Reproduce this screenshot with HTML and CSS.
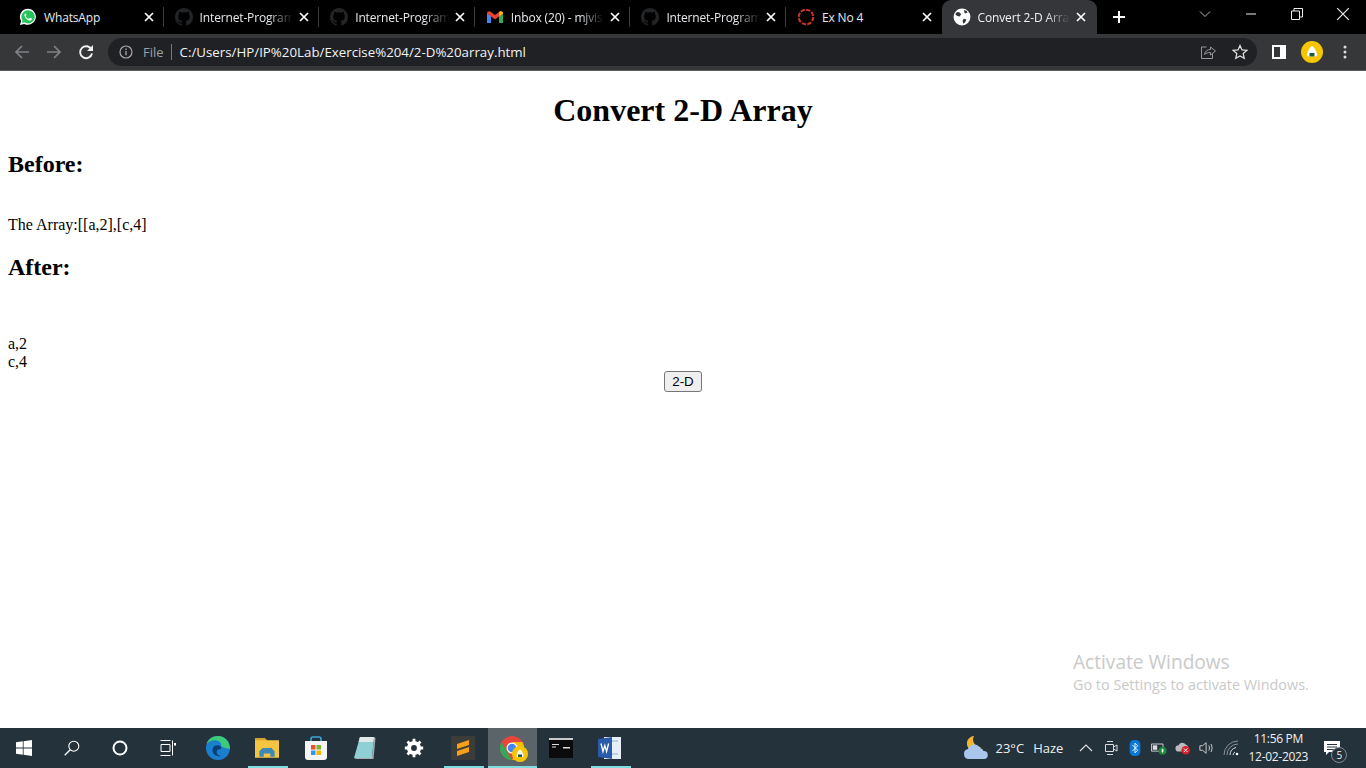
FILE: index.html
```html
<!DOCTYPE html>
<html lang="en">
<head>
  <meta charset="UTF-8" />
  <title>Convert 2-D Array</title>
  <link rel="stylesheet" href="styles.css">
</head>
<body>
  <svg class="sprite" width="0" height="0">
    <symbol id="github" viewBox="0 0 16 16">
      <path d="M8 0C3.58 0 0 3.58 0 8c0 3.54 2.29 6.53 5.47 7.59.4.07.55-.17.55-.38 0-.19-.01-.82-.01-1.49-2.01.37-2.53-.49-2.69-.94-.09-.23-.48-.94-.82-1.13-.28-.15-.68-.52-.01-.53.63-.01 1.08.58 1.23.82.72 1.21 1.87.87 2.33.66.07-.52.28-.87.51-1.07-1.78-.2-3.64-.89-3.64-3.95 0-.87.31-1.59.82-2.15-.08-.2-.36-1.02.08-2.12 0 0 .67-.21 2.2.82.64-.18 1.32-.27 2-.27.68 0 1.36.09 2 .27 1.53-1.04 2.2-.82 2.2-.82.44 1.1.16 1.92.08 2.12.51.56.82 1.27.82 2.15 0 3.07-1.87 3.75-3.65 3.95.29.25.54.73.54 1.48 0 1.07-.01 1.93-.01 2.2 0 .21.15.46.55.38A8.013 8.013 0 0016 8c0-4.42-3.58-8-8-8z" fill="#232426"/>
    </symbol>
    <symbol id="close" viewBox="0 0 10 10">
      <path d="M1 1l8 8M9 1l-8 8" stroke="#fff" stroke-width="1.7" fill="none"/>
    </symbol>
  </svg>

  <div class="tabstrip">
    <div class="tab">
      <svg class="favicon" viewBox="0 0 18 18"><path d="M9 .8a8 8 0 0 0-6.9 12.1L1 17l4.2-1.1A8 8 0 1 0 9 .8z" fill="#fff"/><path d="M9 2.2a6.6 6.6 0 0 0-5.5 10.2l-.7 2.6 2.7-.7A6.6 6.6 0 1 0 9 2.2z" fill="#25c45a"/><path d="M6.7 5.2c-.3 0-.8.2-1 .7-.5 1.100-.3 2.200.6 3.500 1 1.400 2.500 2.700 4.300 3.100.9.200 1.900-.3 2.200-1.100.1-.3.1-.7 0-.8l-1.600-.8c-.2-.1-.4 0-.5.100l-.7.800c-.1.100-.3.200-.5.100-1.200-.5-2-1.300-2.700-2.400-.1-.2 0-.3.100-.5l.5-.6c.1-.1.1-.3 0-.5l-.7-1.500c-.1-.1-.2-.1-.3-.1z" fill="#fff"/></svg>
      <span class="tab-title">WhatsApp</span>
      <svg class="tab-close"><use href="#close"/></svg>
    </div>
    <div class="tab">
      <svg class="favicon"><use href="#github"/></svg>
      <span class="tab-title fade">Internet-Program</span>
      <svg class="tab-close"><use href="#close"/></svg>
    </div>
    <div class="tab">
      <svg class="favicon"><use href="#github"/></svg>
      <span class="tab-title fade">Internet-Program</span>
      <svg class="tab-close"><use href="#close"/></svg>
    </div>
    <div class="tab">
      <svg class="favicon" viewBox="0 0 18 14"><path d="M1 13V3l4 3v7z" fill="#4285f4"/><path d="M13 13V6l4-3v10z" fill="#34a853"/><path d="M1 3.500C1 1.500 3 .6 4.500 1.700L9 5l4.500-3.300C15 .6 17 1.500 17 3.500L13 6.500 9 9.500 5 6.500z" fill="#ea4335"/><path d="M13 2.600l.5-.9C15 .6 17 1.500 17 3.500l-4 3z" fill="#fbbc04"/></svg>
      <span class="tab-title fade">Inbox (20) - mjvis</span>
      <svg class="tab-close"><use href="#close"/></svg>
    </div>
    <div class="tab">
      <svg class="favicon"><use href="#github"/></svg>
      <span class="tab-title fade">Internet-Program</span>
      <svg class="tab-close"><use href="#close"/></svg>
    </div>
    <div class="tab">
      <svg class="favicon" viewBox="0 0 18 18"><circle cx="9" cy="9" r="7.300" fill="none" stroke="#d2322d" stroke-width="2" stroke-dasharray="4.300 1.430"/></svg>
      <span class="tab-title">Ex No 4</span>
      <svg class="tab-close"><use href="#close"/></svg>
    </div>
    <div class="tab tab-active">
      <svg class="favicon" viewBox="0 0 16 16"><circle cx="8" cy="8" r="7.500" fill="#fff"/><path d="M3.500 3.500l2.500.5 1.200 1.500L6 7.500 3.800 7 2 5.500zM9.500 9.500l2.500.7-1.200 2.500-1.600 1.300-.7-2.500zM9.500 2l2.500.5 1 1.500-2.500.8z" fill="#35363a"/></svg>
      <span class="tab-title fade">Convert 2-D Arra</span>
      <svg class="tab-close"><use href="#close"/></svg>
    </div>
    <svg class="newtab" viewBox="0 0 14 14"><path d="M7 1v12M1 7h12" stroke="#fff" stroke-width="2"/></svg>
    <div class="win-controls">
      <svg class="win-chevron" viewBox="0 0 12 8"><path d="M1 1.500l5 5 5-5" stroke="#bbb" fill="none"/></svg>
      <svg class="win-min" viewBox="0 0 12 12"><path d="M1 6h10" stroke="#eee"/></svg>
      <svg class="win-restore" viewBox="0 0 12 12"><path d="M.5 3h8v8.500h-8zM3 3V.5h8.500V9H8.500" stroke="#eee" fill="none"/></svg>
      <svg class="win-x" viewBox="0 0 12 12"><path d="M1 1l10 10M11 1L1 11" stroke="#eee" fill="none"/></svg>
    </div>
  </div>

  <div class="toolbar">
    <svg class="nav-icon" viewBox="0 0 16 16"><path d="M15 8H2M8 2L2 8l6 6" stroke="#808285" stroke-width="1.700" fill="none"/></svg>
    <svg class="nav-icon" viewBox="0 0 16 16"><path d="M1 8h13M8 2l6 6-6 6" stroke="#808285" stroke-width="1.700" fill="none"/></svg>
    <svg class="nav-icon" viewBox="0 0 16 16"><path d="M13.500 5.500A6 6 0 1 0 14 9.500" stroke="#f1f1f1" stroke-width="1.900" fill="none"/><path d="M15 1v6H9z" fill="#f1f1f1"/></svg>
    <div class="omnibox">
      <svg class="info-icon" viewBox="0 0 14 14"><circle cx="7" cy="7" r="6" stroke="#aaa" stroke-width="1.200" fill="none"/><path d="M7 6v4.200M7 3.500v1.400" stroke="#aaa" stroke-width="1.300"/></svg>
      <span class="scheme">File</span>
      <span class="url">C:/Users/HP/IP%20Lab/Exercise%204/2-D%20array.html</span>
      <svg class="omni-icon" viewBox="0 0 16 16"><path d="M6.500 3H1.500v11.500h11V10" stroke="#999" fill="none"/><path d="M4.500 10.500C5 7 7.500 5.500 10.500 5.500V3l5 4-5 4V8.500C8 8.500 6 9 4.500 10.500z" stroke="#999" fill="none"/></svg>
      <svg class="omni-icon star" viewBox="0 0 16 16"><path d="M8 1.500l2 4.400 4.800.5-3.600 3.200 1 4.700L8 11.900l-4.200 2.400 1-4.700L1.200 6.400 6 5.900z" stroke="#ddd" stroke-width="1.300" fill="none"/></svg>
    </div>
    <svg class="side-icon" viewBox="0 0 14 14"><path d="M0 0h14v14H0z" fill="#fff"/><path d="M2 2h6v10H2z" fill="#35363a"/></svg>
    <svg class="avatar" viewBox="0 0 22 22"><circle cx="11" cy="11" r="11" fill="#f7c600"/><path d="M11 5c1.500 0 5 6 5 8.500 0 1.500-1 2-2 2H8c-1 0-2-.5-2-2C6 11 9.500 5 11 5z" fill="#fff"/><path d="M8.500 12h5v3.500h-5z" fill="#1d5b3d"/></svg>
    <svg class="menu-icon" viewBox="0 0 4 14"><circle cx="2" cy="2" r="1.500" fill="#ddd"/><circle cx="2" cy="7" r="1.500" fill="#ddd"/><circle cx="2" cy="12" r="1.500" fill="#ddd"/></svg>
  </div>

  <main class="page">
    <h1>Convert 2-D Array</h1>
    <h2>Before:</h2>
    <p class="before">The Array:[[a,2],[c,4]</p>
    <h2>After:</h2>
    <p class="after">a,2<br>c,4</p>
    <button class="convert-btn">2-D</button>
    <div class="watermark">
      <div class="wm-title">Activate Windows</div>
      <div class="wm-sub">Go to Settings to activate Windows.</div>
    </div>
  </main>

  <div class="taskbar">
    <div class="task-btn">
      <svg class="task-icon" viewBox="0 0 16 16"><path d="M0 2.300l6.800-1v6.300H0zM7.600 1.200L16 0v7.600H7.600zM0 8.400h6.800v6.300l-6.800-1zM7.600 8.400H16V16l-8.400-1.200z" fill="#fff"/></svg>
    </div>
    <div class="task-btn">
      <svg class="task-icon" viewBox="0 0 16 16"><circle cx="9.800" cy="6.200" r="5" stroke="#fff" stroke-width="1.100" fill="none"/><path d="M6.200 9.800L.7 15.300" stroke="#fff" stroke-width="1.300"/></svg>
    </div>
    <div class="task-btn">
      <svg class="task-icon" viewBox="0 0 16 16"><circle cx="8" cy="8" r="6.500" stroke="#fff" stroke-width="2" fill="none"/></svg>
    </div>
    <div class="task-btn">
      <svg class="task-icon" viewBox="0 0 16 16"><path d="M.5.500h10M.5 15.500h10M1 4.500h9v7H1zM12.500 .5v15" stroke="#fff" fill="none"/><path d="M14 3h2v2.500h-2z" fill="#fff"/></svg>
    </div>
    <div class="pinned">
      <div class="app">
        <svg class="app-icon" viewBox="0 0 24 24"><circle cx="12" cy="12" r="12" fill="#1b7fd0"/><path d="M24 13c0-7-5-13-12-13C6 0 2 3.500 .5 8 3 5 7 3.500 11 4.500c3.500 1 5 3.500 4 5.500 3 2 6 2 9 3z" fill="#3dcb7a"/><path d="M15 10.500c-3-2.500-8-1.500-8.500 3-.4 4.500 4 8 9 6.500-3 0-5-2-4.800-4.200.2-2 2.300-3 4.300-2.800z" fill="#0c3f78"/></svg>
      </div>
      <div class="app running">
        <svg class="app-icon" viewBox="0 0 22 20"><path d="M0 1h9l2 2h11v16H0z" fill="#f4c542"/><path d="M0 1h9l2 2H0z" fill="#d9a326"/><path d="M4 18v-5l3-3h8l3 3v5h-4v-3H8v3z" fill="#3f87b5"/></svg>
      </div>
      <div class="app">
        <svg class="app-icon" viewBox="0 0 24 24"><path d="M7 6V3c0-1.500 1-2 2-2h6c1 0 2 .5 2 2v3" stroke="#3ea6d8" stroke-width="1.600" fill="none"/><path d="M1 5h22v16a3 3 0 0 1-3 3H4a3 3 0 0 1-3-3z" fill="#f4f4f4"/><path d="M7 9h4.500v4.500H7z" fill="#e8512f"/><path d="M12.500 9H17v4.500h-4.500z" fill="#7cb82f"/><path d="M7 14.500h4.500V19H7z" fill="#2f9be8"/><path d="M12.500 14.500H17V19h-4.500z" fill="#f7b500"/></svg>
      </div>
      <div class="app">
        <svg class="app-icon" viewBox="0 0 24 24"><path d="M7 1h14l-2 21H1z" fill="#8fd0d4"/><path d="M7 1h14l-.5 5H5.500z" fill="#dfe9e9"/><path d="M19 22l2-21 1.500 1-2 21H3l-2-1z" fill="#a7adad"/></svg>
      </div>
      <div class="app">
        <svg class="app-icon gear" viewBox="0 0 24 24"><path d="M12 3.500a8.500 8.500 0 1 0 0 17 8.500 8.500 0 0 0 0-17zm0 5a3.500 3.500 0 1 1 0 7 3.500 3.500 0 0 1 0-7z" fill="#fff"/><path d="M12 1v5M12 18v5M1 12h5M18 12h5M4.200 4.200l3.500 3.500M16.300 16.300l3.500 3.500M19.800 4.200l-3.500 3.500M7.700 16.300l-3.500 3.500" stroke="#fff" stroke-width="3.400"/></svg>
      </div>
      <div class="app running">
        <svg class="app-icon" viewBox="0 0 24 24"><path d="M0 0h24v24H0z" fill="#3c3c3a"/><path d="M18 4v5L6 13V8zM18 11v5L6 20v-5z" fill="#f8a01a"/></svg>
      </div>
      <div class="app active">
        <svg class="app-icon" viewBox="0 0 24 24"><circle cx="12" cy="12" r="12" fill="#e8453c"/><path d="M12 24A12 12 0 0 1 1.600 6L7 15.500z" fill="#34a853"/><path d="M12 6h10.400A12 12 0 0 1 12 24l5.200-9z" fill="#fbbc04"/><circle cx="12" cy="12" r="5.500" fill="#fff"/><circle cx="12" cy="12" r="4.300" fill="#4285f4"/></svg>
        <svg class="app-badge" viewBox="0 0 16 16"><circle cx="8" cy="8" r="8" fill="#f7c600"/><path d="M8 3.500c1 0 3.500 4 3.500 6 0 1-.7 1.500-1.500 1.500H6c-.8 0-1.500-.5-1.500-1.500 0-2 2.500-6 3.500-6z" fill="#fff"/><path d="M6 8.500h4V11H6z" fill="#1d5b3d"/></svg>
      </div>
      <div class="app">
        <svg class="app-icon cmd" viewBox="0 0 24 20"><path d="M0 0h24v20H0z" fill="#0b0b0b"/><path d="M0 0h24v2H0z" fill="#c9c9c9"/><path d="M3 6h7v1H3zM14 9h7v1.500h-7zM3 8.500h4v1H3z" fill="#ddd"/></svg>
      </div>
      <div class="app running">
        <svg class="app-icon" viewBox="0 0 24 24"><path d="M6 1h17v22H6z" fill="#e8eef8"/><path d="M9 5h11M9 18h11" stroke="#8ab0dc"/><path d="M0 3l14-2v22L0 21z" fill="#2a5ba8"/><path d="M3 7.500l2 8 1.800-6 1.800 6 2-8" stroke="#fff" stroke-width="1.300" fill="none"/></svg>
      </div>
    </div>
    <div class="tray">
      <svg class="weather" viewBox="0 0 26 24"><path d="M11 0a7.500 7.500 0 0 0 7 11 7.500 7.500 0 1 1-7-11z" fill="#f3b52e"/><path d="M6 23a5 5 0 0 1-1-9.900A6.500 6.500 0 0 1 17 12a4 4 0 0 1 3.500 3A4 4 0 0 1 21 23z" fill="#a9c6ec"/></svg>
      <span class="temp">23°C</span>
      <span class="haze">Haze</span>
      <svg class="tray-chevron" viewBox="0 0 14 8"><path d="M1 7l6-6 6 6" stroke="#ddd" stroke-width="1.200" fill="none"/></svg>
      <svg class="tray-icon meet" viewBox="0 0 16 16"><path d="M4 1.500h6M4 14.500h6" stroke="#ddd"/><path d="M2.500 4.500h8v7h-8zM10.500 7l3.500-2v6l-3.500-2" stroke="#ddd" fill="none"/></svg>
      <svg class="tray-icon bt" viewBox="0 0 12 18"><rect width="12" height="18" rx="5" fill="#0a78d6"/><path d="M3 5.500l6 6-3 3v-11l3 3-6 6" stroke="#fff" fill="none"/></svg>
      <svg class="tray-icon batt" viewBox="0 0 18 16"><path d="M.5 3.500h13v8H.5z" stroke="#ddd" fill="none"/><path d="M2 5h5v5H2z" fill="#ddd"/><circle cx="13" cy="11" r="4.500" fill="#1f8a3b"/><path d="M13 8.500c1.500 1 1.500 3 0 5-1.500-2-1.500-4 0-5z" fill="#fff"/></svg>
      <svg class="tray-icon cloudx" viewBox="0 0 18 16"><path d="M4 12a3.500 3.500 0 0 1 0-7A4.500 4.500 0 0 1 12 4a4 4 0 0 1 3 3v2l-4 3z" fill="#b9bcbe"/><circle cx="12" cy="10.500" r="4.800" fill="#d8202f"/><path d="M10 8.500l4 4M14 8.500l-4 4" stroke="#fff"/></svg>
      <svg class="tray-icon vol" viewBox="0 0 18 16"><path d="M1 5.500h3L8 2v12l-4-3.500H1z" stroke="#ddd" fill="none"/><path d="M11 5c1 1.800 1 4.200 0 6M13.500 3.500c1.500 2.500 1.500 6.500 0 9" stroke="#ddd" fill="none"/></svg>
      <svg class="tray-icon wifi" viewBox="0 0 16 16"><path d="M1 15A14 14 0 0 1 15 1M4 15A11 11 0 0 1 15 4" stroke="#8b9298" fill="none"/><path d="M7 15a8 8 0 0 1 6-7.500" stroke="#ddd" fill="none"/><path d="M10 15a4 4 0 0 1 2-3" stroke="#ddd" fill="none"/><circle cx="14" cy="14" r="1.300" fill="#fff"/></svg>
      <div class="clock">
        <div>11:56 PM</div>
        <div>12-02-2023</div>
      </div>
      <div class="notif">
        <svg class="notif-icon" viewBox="0 0 16 15"><path d="M0 0h16v11H5l-3 3v-3H0z" fill="#fff"/><path d="M3 3.500h10M3 6h10M3 8.500h7" stroke="#24323c"/></svg>
        <span class="notif-count">5</span>
      </div>
    </div>
  </div>
</body>
</html>
```
FILE: styles.css
```css
html, body {
  margin: 0;
  height: 100%;
  overflow: hidden;
}
body {
  display: flex;
  flex-direction: column;
  height: 768px;
  background: #fff;
  font-family: "Open Sans", "Noto Sans", sans-serif;
}
.sprite {
  position: absolute;
}

/* tab strip */
.tabstrip {
  display: flex;
  align-items: stretch;
  height: 34px;
  padding-left: 8px;
  background: #000;
  flex-shrink: 0;
}
.tab {
  display: flex;
  align-items: center;
  box-sizing: border-box;
  width: 155.6px;
  padding: 0 10px 0 11px;
  background: linear-gradient(#3c3c3c, #3c3c3c) right center / 1px 20px no-repeat;
  color: #e8eaed;
}
.tab:nth-child(6) {
  background: none;
}
.tab-active {
  padding-right: 11px;
  background: #35363a;
  border-radius: 9px 9px 0 0;
  color: #f1f1f1;
}
.favicon {
  width: 18px;
  height: 18px;
  flex-shrink: 0;
}
.tab-title {
  flex: 1;
  min-width: 0;
  margin-left: 7px;
  font-size: 12px;
  letter-spacing: -0.15px;
  white-space: nowrap;
  overflow: hidden;
}
.fade {
  -webkit-mask-image: linear-gradient(to right, #000 72%, transparent 98%);
  mask-image: linear-gradient(to right, #000 72%, transparent 98%);
}
.tab-close {
  width: 10px;
  height: 10px;
  margin-left: 4px;
  flex-shrink: 0;
}
.newtab {
  width: 14px;
  height: 14px;
  margin: 10px 0 0 15px;
}
.win-controls {
  display: flex;
  align-items: flex-start;
  margin-left: auto;
}
.win-chevron {
  width: 12px;
  height: 8px;
  margin: 10px 34px 0 0;
}
.win-min,
.win-restore {
  width: 12px;
  height: 12px;
  margin-top: 8px;
}
.win-min {
  margin-right: 34px;
}
.win-restore {
  margin-right: 33px;
}
.win-x {
  width: 14px;
  height: 14px;
  margin: 7px 16px 0 0;
}

/* toolbar */
.toolbar {
  display: flex;
  align-items: center;
  box-sizing: border-box;
  height: 37px;
  padding: 0 0 1px 14px;
  background: #363739;
  border-bottom: 1px solid #5b5c5e;
  flex-shrink: 0;
}
.nav-icon {
  width: 16px;
  height: 16px;
  margin-right: 16px;
}
.omnibox {
  display: flex;
  align-items: center;
  box-sizing: border-box;
  width: 1149px;
  height: 28px;
  margin-left: -2px;
  padding: 0 9px 0 11px;
  background: #202124;
  border-radius: 14px;
}
.info-icon {
  width: 14px;
  height: 14px;
}
.scheme {
  margin-left: 10px;
  padding-right: 7px;
  border-right: 1px solid #777;
  color: #9aa0a6;
  font-size: 13px;
  line-height: 16px;
}
.url {
  flex: 1;
  margin-left: 8px;
  color: #f1f3f4;
  font-size: 13.3px;
}
.omni-icon {
  width: 16px;
  height: 16px;
  margin-right: 16px;
}
.omni-icon.star {
  margin-right: 0;
}
.side-icon {
  width: 14px;
  height: 14px;
  margin-left: 15px;
}
.avatar {
  width: 22px;
  height: 22px;
  margin-left: 15px;
}
.menu-icon {
  width: 4px;
  height: 14px;
  margin-left: 20px;
}

/* the actual page */
.page {
  position: relative;
  flex: 1;
  padding: 0 8px;
  color: #000;
  font-family: "Liberation Serif", serif;
  font-size: 16px;
  overflow: hidden;
}
.page h1 {
  margin: 21px 0 22px;
  font-size: 32px;
  text-align: center;
}
.page h2 {
  margin: 20px 0;
  font-size: 24px;
}
.before {
  margin: 38px 0 20px;
  line-height: 18px;
}
.after {
  margin: 54px 0 0;
  line-height: 18px;
}
.convert-btn {
  display: block;
  width: 38px;
  height: 21px;
  margin: 0 auto;
  padding: 0;
  background: #efefef;
  border: 1px solid #767676;
  border-radius: 3px;
  color: #000;
  font-family: "Liberation Sans", sans-serif;
  font-size: 13.3px;
}
.watermark {
  position: absolute;
  left: 1073px;
  top: 578px;
  color: #c9c9c9;
  font-family: "Open Sans", sans-serif;
}
.wm-title {
  font-size: 19.1px;
  line-height: 26px;
}
.wm-sub {
  font-size: 14.4px;
  line-height: 20px;
}

/* taskbar */
.taskbar {
  display: flex;
  align-items: stretch;
  height: 40px;
  background: #24323c;
  flex-shrink: 0;
}
.task-btn {
  display: flex;
  align-items: center;
  justify-content: center;
  width: 48px;
}
.task-icon {
  width: 16px;
  height: 16px;
}
.pinned {
  display: flex;
  margin-left: 1.5px;
}
.app {
  position: relative;
  display: flex;
  align-items: center;
  justify-content: center;
  width: 49px;
}
.app-icon {
  width: 24px;
  height: 24px;
}
.app-icon.cmd {
  height: 20px;
}
.app-icon.gear {
  width: 20px;
  height: 20px;
}
.running::after,
.active::after {
  content: "";
  position: absolute;
  left: 5px;
  right: 4px;
  bottom: 0;
  height: 2px;
  background: #7fdde0;
}
.active {
  background: #5a6469;
}
.active::after {
  left: 0;
  right: 0;
}
.app-badge {
  position: absolute;
  left: 24px;
  top: 18px;
  width: 16px;
  height: 16px;
}
.tray {
  display: flex;
  align-items: center;
  margin-left: 328px;
  color: #f0f0f0;
  font-size: 13px;
}
.weather {
  width: 26px;
  height: 24px;
}
.temp {
  margin-left: 7px;
}
.haze {
  margin-left: 9px;
}
.tray-chevron {
  width: 14px;
  height: 8px;
  margin-left: 16px;
}
.tray-icon {
  width: 16px;
  height: 16px;
  margin-left: 8px;
}
.tray-icon.meet {
  margin-left: 10px;
}
.clock {
  width: 78px;
  font-size: 12px;
  letter-spacing: -0.3px;
  line-height: 18px;
  text-align: center;
}
.notif {
  position: relative;
  display: flex;
  margin-left: 7px;
}
.notif-icon {
  width: 16px;
  height: 15px;
}
.notif-count {
  position: absolute;
  left: 7px;
  top: 6px;
  width: 14px;
  height: 14px;
  background: #24323c;
  border: 1px solid #889;
  border-radius: 50%;
  font-size: 10px;
  line-height: 14px;
  text-align: center;
}
```
